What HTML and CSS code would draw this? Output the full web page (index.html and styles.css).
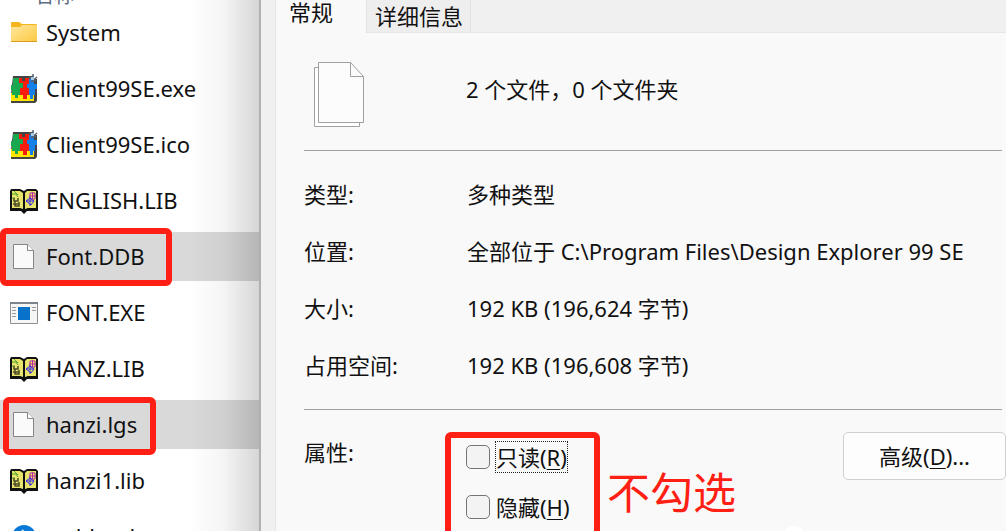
FILE: index.html
```
<!DOCTYPE html>
<html lang="zh-CN">
<head>
    <meta charset="UTF-8">
    <title>属性</title>
    <link rel="stylesheet" href="styles.css">
</head>
<body>
<!-- 公用图标 -->
<svg class="defs" width="0" height="0">
    <symbol id="folder" viewBox="0 0 30 30">
        <defs>
            <linearGradient id="fold" x1="0" y1="0" x2="1" y2="1">
                <stop offset="0" stop-color="#ffe7a0"/>
                <stop offset="1" stop-color="#fdc93f"/>
            </linearGradient>
        </defs>
        <path d="M2 5q0-1 1-1h7l3 2h14q1 0 1 1v5H2z" fill="#f5b51f"/>
        <path d="M2 9h9l2-2h14q1 0 1 1v15q0 1-1 1H3q-1 0-1-1z" fill="url(#fold)"/>
        <path d="M2 23.5h26" stroke="#dd9d22"/>
    </symbol>
    <symbol id="puzzle" viewBox="0 0 30 30">
        <path d="M4 2h21v3h3v22l-2 2H2V20z" fill="#444"/>
        <path d="M2 19h23v8H2z" fill="#ffe500"/>
        <path d="M4 4h7v5h3v5h-3v7H9v3H6v-3H3v-5H2v-5h2z" fill="#18a850"/>
        <path d="M10 4h3v3h3V4h4v6h-2v4h3v7h-3v4h-4v-4h-3v-7h3V9h-4z" fill="#f81c0c"/>
        <path d="M20 5h5v5h3v5h-2v6h-2v4h-3v-4h-1v-7h-2v-4h2z" fill="#1581e8"/>
        <path d="M20 3l7 4M24 0v8M28 3l-6 5" stroke="#56626e" stroke-width="1.5"/>
        <path d="M22 3h3v3h-3z" fill="#a9c9e2"/>
    </symbol>
    <symbol id="book" viewBox="0 0 30 30">
        <path d="M1 5l1-2h9l4 2 3-2h9l2 2v20H18l-3 3-3-3H1z" fill="#111"/>
        <path d="M3 5h8l3 2v16l-3-1H3zM18 5h9v17h-8l-3 1V7z" fill="#e9e56c"/>
        <path d="M3 8h4l2 3M3 12h3M5 5l4 4" stroke="#4fa52f" fill="none"/>
        <path d="M5 12v3h4v-3M6 15v5h4v-4M4 18h6" stroke="#4c4c28" fill="none" stroke-width="1.5"/>
        <path d="M21 7h5v6h-5zM23.5 6v7M20 10h7" stroke="#b32aa0" fill="none"/>
        <path d="M17 15l4-3 4 3-3 4zM21 11v9M17 15h8" stroke="#382ae0" fill="none"/>
    </symbol>
    <symbol id="paper" viewBox="0 0 30 30">
        <path d="M4.5 2.5h14l6 6v18h-20z" fill="#fafafa" stroke="#858585"/>
        <path d="M18.5 2.5v6h6" fill="#fff" stroke="#858585"/>
    </symbol>
    <symbol id="app" viewBox="0 0 30 30">
        <path d="M1.5 4.5h27v21h-27z" fill="#f6f6f6" stroke="#8f8f8f"/>
        <path d="M1 4h28v2H1z" fill="#7c858d"/>
        <path d="M3 9.5h4M3 12.5h4M3 15.5h4M3 18.5h4M23 9.5h4M23 12.5h4" stroke="#9a9a9a"/>
        <path d="M9 9h12v13H9z" fill="#0872ca"/>
    </symbol>
    <symbol id="disc" viewBox="0 0 30 30">
        <circle cx="15" cy="15" r="12" fill="#0a78d7"/>
        <path d="M13 8l5 5-5 7" stroke="#d7edff" fill="none" stroke-width="2"/>
    </symbol>
</svg>

<div class="screen">
    <section class="files">
        <div class="files-head"><span>名称</span></div>
        <ul class="file-list">
            <li><svg class="icon"><use href="#folder"/></svg><span>System</span></li>
            <li><svg class="icon"><use href="#puzzle"/></svg><span>Client99SE.exe</span></li>
            <li><svg class="icon"><use href="#puzzle"/></svg><span>Client99SE.ico</span></li>
            <li><svg class="icon"><use href="#book"/></svg><span>ENGLISH.LIB</span></li>
            <li class="selected"><svg class="icon"><use href="#paper"/></svg><span>Font.DDB</span><i class="mark mark-font"></i></li>
            <li><svg class="icon"><use href="#app"/></svg><span>FONT.EXE</span></li>
            <li><svg class="icon"><use href="#book"/></svg><span>HANZ.LIB</span></li>
            <li class="selected"><svg class="icon"><use href="#paper"/></svg><span>hanzi.lgs</span><i class="mark mark-hanzi"></i></li>
            <li><svg class="icon"><use href="#book"/></svg><span>hanzi1.lib</span></li>
            <li><svg class="icon"><use href="#disc"/></svg><span>webhook</span></li>
        </ul>
    </section>

    <section class="dialog">
        <nav class="tabs">
            <button type="button" class="tab active">常规</button>
            <button type="button" class="tab">详细信息</button>
        </nav>
        <div class="panel">
            <div class="row summary">
                <svg class="papers" viewBox="0 0 52 66">
                    <path d="M5.5 5.5h-4v59h45v-4" fill="#fff" stroke="#a0a0a0"/>
                    <path d="M5.5 .5h32l13 14v46h-45z" fill="#fcfcfc" stroke="#a0a0a0"/>
                    <path d="M37.5 .5v14h13" fill="none" stroke="#a0a0a0"/>
                </svg>
                <span>2 个文件，0 个文件夹</span>
            </div>
            <dl class="info">
                <dt>类型:</dt><dd>多种类型</dd>
                <dt>位置:</dt><dd>全部位于 C:\Program Files\Design Explorer 99 SE</dd>
                <dt>大小:</dt><dd>192 KB (196,624 字节)</dd>
                <dt>占用空间:</dt><dd>192 KB (196,608 字节)</dd>
            </dl>
            <div class="row attrs">
                <span class="attrs-title">属性:</span>
                <div class="checks">
                    <label><input type="checkbox"><span class="focus">只读(<u>R</u>)</span></label>
                    <label><input type="checkbox"><span>隐藏(<u>H</u>)</span></label>
                </div>
                <strong class="note">不勾选</strong>
                <button type="button" class="advanced">高级(<u>D</u>)...</button>
                <i class="dot"></i>
            </div>
        </div>
    </section>
</div>
</body>
</html>
```

FILE: styles.css
```
*{
    margin: 0;padding: 0;
    box-sizing: border-box;
}
ul{list-style: none}
i{font-style: normal}
.defs{position: absolute}
body{
    overflow: hidden;
    background: #f9f9f9;
    color: #111;
    font: 22px/30px "Noto Sans", "Noto Sans CJK SC", sans-serif;
}
button,input{
    font: inherit;
    color: inherit;
}
.screen{
    display: flex;
    height: 100vh;
    overflow: hidden;
}

/* 左侧文件列表 */
.files{
    position: relative;
    flex: 0 0 261px;
    background: #fff;
    border-right: 2px solid #b0b0b0;
}
/* 对话框投下的阴影 */
.files::after{
    content: "";
    position: absolute;
    top: 0;right: 0;bottom: 0;
    width: 72px;
    background: linear-gradient(to right, rgba(0,0,0,0), rgba(0,0,0,.04) 50%, rgba(0,0,0,.16));
}
.files-head{
    display: flex;
    align-items: flex-end;
    height: 8px;
    padding-left: 34px;
    color: #5b6b80;
    font-size: 20px;
    line-height: 24px;
}
.file-list{
    display: grid;
    grid-auto-rows: 49px;
    row-gap: 7px;
}
.file-list li{
    position: relative;
    display: flex;
    align-items: center;
    gap: 7px;
    padding-left: 9px;
    white-space: nowrap;
}
.file-list span{padding-bottom: 2px}
.icon{
    width: 30px;
    height: 30px;
}
.selected{background: #d9d9d9}

/* 红色标注 */
.mark{
    position: absolute;
    z-index: 1;
    border: 6px solid #ff1f14;
    border-radius: 6px;
}
.mark-font{
    left: 0;top: -4px;
    width: 172px;
    height: 58px;
}
.mark-hanzi{
    left: 3px;top: -3px;
    width: 153px;
    height: 58px;
}

/* 右侧属性窗口 */
.dialog{
    flex: 1;
    min-width: 0;
    padding-left: 14px;
    background: #f0f0f0;
}
.tabs{
    display: flex;
    height: 33px;
    border-left: 1px solid #e6e6e6;
    border-bottom: 1px solid #e6e6e6;
}
.tab{
    border: 0;
    padding: 0 7px 0 8px;
    background: #eee;
    border-right: 1px solid #e3e3e3;
    line-height: 32px;
}
.tab.active{
    width: 91px;
    height: 33px;
    padding: 0 0 10px 13px;
    background: #f9f9f9;
    text-align: left;
    line-height: 24px;
}
.panel{
    border-left: 1px solid #e6e6e6;
    background: #f9f9f9;
    padding: 0 4px 0 28px;
    min-height: 100vh;
}
.row{display: flex}
.summary{
    align-items: flex-start;
    gap: 101px;
    height: 118px;
    padding: 29px 0 0 9px;
    border-bottom: 1px solid #a0a0a0;
}
.summary span{padding-top: 12px}
.papers{
    width: 52px;
    height: 66px;
}
.info{
    display: grid;
    grid-template-columns: 163px 1fr;
    row-gap: 27px;
    padding: 28px 0 29px;
    border-bottom: 1px solid #a0a0a0;
}
.attrs{
    position: relative;
    align-items: flex-start;
    padding-top: 22px;
}
.attrs-title{
    width: 141px;
    padding-top: 5px;
}
.checks{
    width: 155px;
    height: 108px;
    padding: 12px 0 0 15px;
    border: 6px solid #ff1f14;
    border-radius: 6px;
}
.checks label{
    display: flex;
    align-items: center;
    gap: 6px;
    height: 30px;
    margin-top: -8px;
    margin-bottom: 28px;
    white-space: nowrap;
}
.checks input{
    appearance: none;
    width: 24px;
    height: 24px;
    border: 1px solid #757575;
    border-radius: 5px;
    background: #f3f3f3;
}
.focus{outline: 1px dotted #222}
u{text-underline-offset: 3px;text-decoration-thickness: 1px}
.note{
    padding: 31px 0 0 7px;
    color: #ff1f14;
    font-size: 43px;
    line-height: 60px;
    font-weight: 400;
}
.advanced{
    width: 163px;
    height: 48px;
    margin-left: auto;
    margin-right: -4px;
    border: 1px solid #d0d0d0;
    border-radius: 5px;
    background: #fdfdfd;
}
.dot{
    position: absolute;
    top: 116px;
    right: 196px;
    width: 24px;
    height: 24px;
    border-radius: 50%;
    background: #fff;
}
```
